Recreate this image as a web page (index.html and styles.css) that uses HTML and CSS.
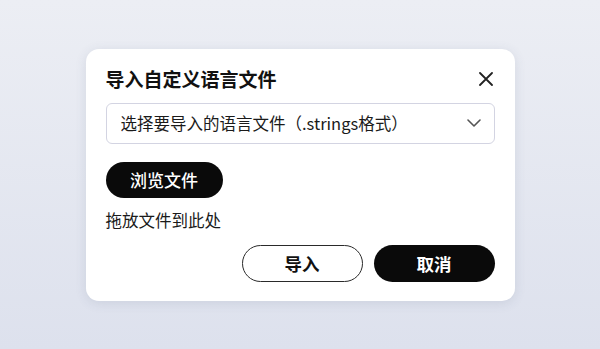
FILE: index.html
```html
<!DOCTYPE html>
<html lang="zh-CN">
<head>
<meta charset="utf-8">
<title>导入自定义语言文件</title>
<link rel="stylesheet" href="styles.css">
</head>
<body>
<div class="stage">
  <div class="dialog">
    <div class="header">
      <h1 class="title">导入自定义语言文件</h1>
      <button class="close" aria-label="关闭">
        <svg width="14" height="14" viewBox="0 0 14 14"><path d="M1 1L13 13M13 1L1 13" stroke="#222" stroke-width="1.8" stroke-linecap="round" fill="none"/></svg>
      </button>
    </div>
    <div class="select">
      <span class="select-text">选择要导入的语言文件（.strings格式）</span>
      <svg class="chevron" width="14" height="8" viewBox="0 0 14 8"><path d="M1 1L7 7L13 1" stroke="#555" stroke-width="1.6" stroke-linecap="round" stroke-linejoin="round" fill="none"/></svg>
    </div>
    <button class="btn btn-dark browse">浏览文件</button>
    <p class="drop">拖放文件到此处</p>
    <div class="actions">
      <button class="btn btn-outline">导入</button>
      <button class="btn btn-dark">取消</button>
    </div>
  </div>
</div>
</body>
</html>
```
FILE: styles.css
```css
* { box-sizing: border-box; }
html, body { margin: 0; padding: 0; }
body {
  width: 600px;
  height: 349px;
  overflow: hidden;
  font-family: "Noto Sans CJK SC", "Noto Sans", sans-serif;
  background: linear-gradient(180deg, #eceef4 0%, #dde1ed 100%);
  color: #111;
}
.stage {
  width: 600px;
  height: 349px;
  display: flex;
  align-items: center;
  justify-content: center;
}
.dialog {
  width: 429px;
  height: 252px;
  background: #fff;
  border-radius: 13px;
  box-shadow: 0 2px 12px rgba(60, 70, 110, 0.12);
  padding: 20px 20px 19px 20px;
  display: flex;
  flex-direction: column;
  align-items: flex-start;
}
.header {
  width: 100%;
  height: 20px;
  display: flex;
  align-items: center;
  justify-content: space-between;
}
.title {
  margin: 0;
  font-size: 19px;
  font-weight: 700;
  line-height: 20px;
  color: #111;
}
.close {
  border: 0;
  background: none;
  padding: 0;
  margin-right: 2px;
  width: 14px;
  height: 14px;
  display: flex;
}
.select {
  margin-top: 14px;
  width: 100%;
  height: 41px;
  border: 1px solid #d3d4e2;
  border-radius: 6px;
  display: flex;
  align-items: center;
  justify-content: space-between;
  padding: 0 13px 0 14px;
}
.select-text {
  font-size: 16.5px;
  color: #1a1a1a;
}
.btn {
  font-family: inherit;
  border-radius: 999px;
  font-size: 17px;
  font-weight: 500;
  display: flex;
  align-items: center;
  justify-content: center;
  padding: 0;
  cursor: pointer;
}
.btn-dark {
  background: #0a0a0a;
  color: #fff;
  border: 0;
}
.btn-outline {
  background: #fff;
  color: #111;
  border: 1.5px solid #2a2a2a;
}
.browse {
  margin-top: 18px;
  width: 117px;
  height: 36px;
}
.drop {
  margin: 12px 0 0 0;
  font-size: 16.5px;
  line-height: 20px;
  color: #1a1a1a;
}
.actions {
  margin-top: auto;
  align-self: flex-end;
  display: flex;
  gap: 11px;
}
.actions .btn {
  width: 121px;
  height: 37px;
  font-size: 17.5px;
  font-weight: 700;
}
```
